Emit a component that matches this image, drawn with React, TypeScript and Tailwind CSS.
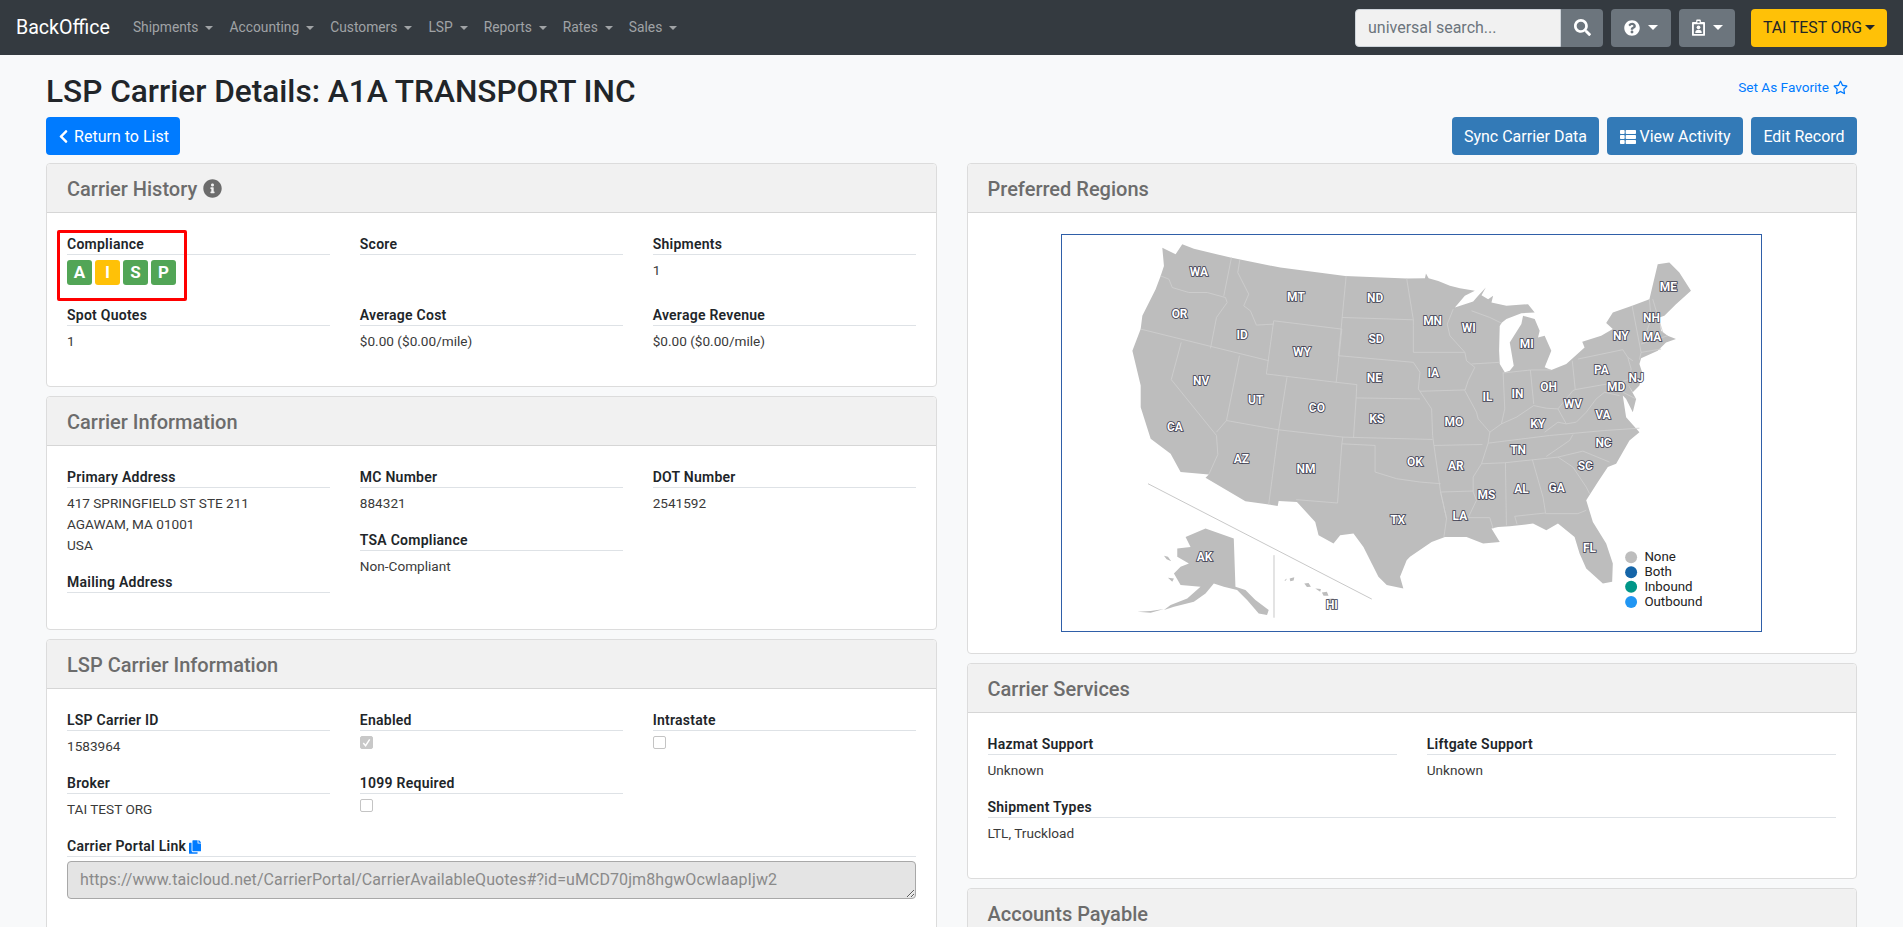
import type { ReactNode } from 'react';
import { FaChevronLeft, FaCopy, FaInfoCircle, FaQuestionCircle, FaRegStar, FaSearch, FaThList } from 'react-icons/fa';

const navItems = ['Shipments', 'Accounting', 'Customers', 'LSP', 'Reports', 'Rates', 'Sales'];

const usOutline = `M155,25 L190,38 L300,65 L450,95 L645,120 L830,128 L885,127 L888,113 L896,127 L925,135 L960,150 L990,157 L1035,165
L1005,180 L975,215 L1030,197 L1045,180 L1068,155 L1055,178 L1075,190 L1090,180 L1085,200 L1130,210 L1195,205 L1215,230
L1175,232 L1130,250 L1115,262 L1095,298 L1110,265 L1108,345 L1110,385 L1125,410 L1140,405 L1152,390 L1140,320 L1175,265
L1180,240 L1215,250 L1230,285 L1225,305 L1245,300 L1265,345 L1245,395 L1265,403 L1310,385 L1365,335 L1358,318 L1415,300
L1450,280 L1430,262 L1450,230 L1508,210 L1560,190 L1585,85 L1620,80 L1650,110 L1685,165 L1640,205 L1605,240 L1590,245
L1595,285 L1615,300 L1640,310 L1610,320 L1585,345 L1535,368 L1530,385 L1538,410 L1530,450 L1510,470 L1495,445 L1520,490
L1510,530 L1490,490 L1480,480 L1490,545 L1530,590 L1500,615 L1460,685 L1435,695 L1405,740 L1370,795 L1390,860 L1430,925
L1450,985 L1448,1040 L1420,1045 L1370,1000 L1350,955 L1335,905 L1285,865 L1250,885 L1210,865 L1140,873 L1105,875 L1085,880
L1110,920 L1060,925 L1010,905 L945,905 L905,920 L840,965 L830,975 L810,1025 L820,1060 L770,1050 L745,1025 L700,935 L670,895
L630,900 L610,925 L565,900 L555,860 L500,800 L445,797 L442,812 L410,807 L345,798 L225,727 L235,717 L150,710 L120,655 L60,610
L30,515 L30,450 L5,345 L30,280 L35,240 L75,160 L90,120 L100,90 L95,35 L135,55 L155,25 Z`;

const alaska = `M165,905 L225,880 L310,910 L315,1055 L345,1065 L375,1095 L415,1125 L410,1140 L385,1135 L350,1095 L320,1065 L280,1055
L250,1045 L225,1075 L190,1100 L130,1115 L100,1125 L120,1110 L170,1090 L210,1055 L150,1050 L130,1015 L150,995 L175,985
L140,965 L140,940 L180,935 Z`;

const islands = `M100,962 L112,965 L122,978 L108,972 Z M112,1028 L130,1030 L125,1040 Z M20,1130 L60,1128 L100,1122 L60,1133 Z
M462,1035 L470,1030 L466,1037 Z M478,1030 L492,1026 L490,1036 L480,1038 Z M522,1045 L535,1044 L542,1055 L530,1056 Z
M555,1060 L572,1062 L570,1070 Z M575,1072 L590,1070 L595,1082 L580,1082 Z M590,1092 L610,1090 L615,1110 L600,1118 L590,1105 Z`;

const stateLines = [
  '90,120 115,130 125,155 175,170 230,170 285,185',
  '303,65 280,180',
  '285,185 290,200 258,245 240,338',
  '30,280 415,375',
  '328,72 322,110 355,175 340,210 360,225 378,268 430,265',
  '430,255 408,415 618,440 635,280 430,255',
  '648,120 636,245 850,252',
  '636,245 625,360 795,375 850,380 870,410 865,460 905,520 908,600 912,630 932,770 950,850 942,905',
  '618,440 680,447 678,487 870,490',
  '470,425 445,583 640,605 908,612',
  '327,360 288,555 445,583',
  '152,320 122,432 258,600 262,657 235,717',
  '288,555 258,590',
  '678,487 670,607',
  '638,605 635,625 622,803 498,793',
  '635,625 735,630 735,710 800,730 870,740 932,745',
  '445,583 415,807',
  '830,128 850,252 850,270 850,350',
  '850,350 1005,350',
  '870,467 1005,463',
  '912,630 1058,627',
  '932,770 1030,767',
  '970,220 952,265 960,300 1005,350 1010,375 1035,395 1015,435 1005,465 1040,530 1045,550 1080,590 1075,623 1055,685 1030,725 1030,770 1040,795 1015,847 1080,847 1090,880',
  '1025,385 1108,380',
  '1025,225 1080,245 1115,262',
  '1120,410 1125,520 1115,565 1080,590',
  '1120,412 1202,403 1265,403',
  '1202,403 1212,505',
  '1115,565 1160,545 1212,510 1250,518 1285,520 1330,465 1337,462',
  '1328,375 1337,462 1490,435 1500,430 1505,400 1495,365 1480,342 1345,370',
  '1495,365 1510,375',
  '1508,210 1535,350 1530,372',
  '1560,190 1565,250 1540,320',
  '1570,190 1600,290',
  '1535,325 1615,300',
  '1535,350 1595,340',
  '1285,520 1310,565 1340,560 1370,530 1400,490 1425,470 1470,480',
  '1075,623 1260,600 1425,585 1530,578',
  '1245,590 1285,560 1310,565',
  '1055,685 1125,682 1210,673 1285,665 1360,647 1440,680',
  '1250,663 1320,615 1330,597',
  '1285,665 1330,695 1370,755 1380,775',
  '1127,682 1130,870',
  '1208,673 1240,785 1248,835 1345,835 1370,825',
  '1248,833 1155,843 1162,867',
  '932,770 950,850',
  '1480,470 1520,490',
];

const stateLabels: [string, number, number][] = [
  ['WA', 205, 107], ['MT', 497, 183], ['ND', 735, 187], ['OR', 147, 235], ['ID', 335, 297], ['SD', 738, 310],
  ['WY', 515, 348], ['NE', 733, 425], ['NV', 212, 435], ['UT', 376, 492], ['CO', 560, 516], ['KS', 740, 549],
  ['CA', 133, 575], ['MN', 908, 255], ['WI', 1017, 275], ['MI', 1191, 323], ['ME', 1617, 153], ['NH', 1566, 246],
  ['NY', 1474, 300], ['MA', 1568, 302], ['PA', 1416, 402], ['NJ', 1520, 425], ['MD', 1460, 453], ['IA', 910, 410],
  ['OH', 1257, 453], ['IN', 1163, 473], ['IL', 1073, 483], ['WV', 1330, 505], ['VA', 1420, 537], ['KY', 1224, 563],
  ['MO', 972, 558], ['AZ', 333, 670], ['NM', 527, 699], ['OK', 855, 678], ['TX', 803, 852], ['AK', 222, 966],
  ['HI', 605, 1110], ['NC', 1422, 622], ['TN', 1165, 642], ['AR', 978, 690], ['SC', 1367, 690], ['MS', 1070, 777],
  ['AL', 1175, 759], ['GA', 1281, 756], ['LA', 990, 840], ['FL', 1380, 938],
];

const legend: [string, string, number][] = [
  ['None', '#bdbdbd', 966],
  ['Both', '#1565a8', 1011],
  ['Inbound', '#009688', 1055],
  ['Outbound', '#2196f3', 1101],
];

function Caret({ big }: { big?: boolean }) {
  return (
    <span
      className={
        big
          ? 'inline-block h-0 w-0 border-x-[5px] border-t-[5px] border-x-transparent border-t-current'
          : 'inline-block h-0 w-0 border-x-[4px] border-t-[4.8px] border-x-transparent border-t-current'
      }
    />
  );
}

function Card({ title, children, map }: { title: ReactNode; children?: ReactNode; map?: boolean }) {
  return (
    <div className="mb-[9px] rounded-[4px] border border-[#dcdcdc] bg-white">
      <div className="flex h-[49px] items-center gap-[6px] rounded-t-[4px] border-b border-[#d6d6d6] bg-[#f1f1f1] px-5 pt-px text-[20px] font-medium text-[#6c6c6c]">
        {title}
      </div>
      {children && <div className={`relative px-5 pt-[21px] ${map ? 'pb-[21px]' : 'pb-[18px]'}`}>{children}</div>}
    </div>
  );
}

function Field({ label, children }: { label: ReactNode; children?: ReactNode }) {
  return (
    <div className={`leading-[21px] ${children ? 'mb-4' : 'mb-[18px]'}`}>
      <div className="h-[21px] border-b border-[#dee2e6] text-[14px] font-semibold tracking-[0.25px] text-[#212529]">{label}</div>
      {children && <div className="mt-[5px] text-[13.6px] text-[#3a3a3a]">{children}</div>}
    </div>
  );
}

function Badge({ letter, color }: { letter: string; color: string }) {
  return (
    <span className={`flex h-[25px] w-[25px] items-center justify-center rounded-[3px] text-[17px] font-bold text-white ${color}`}>
      {letter}
    </span>
  );
}

function Checkbox({ checked }: { checked?: boolean }) {
  return (
    <span className={`mt-[2px] flex h-[13px] w-[13px] items-center justify-center rounded-[2px] border ${checked ? 'border-[#c8c8c8] bg-[#c8c8c8]' : 'border-[#c4c4c4] bg-white'}`}>
      {checked && (
        <svg viewBox="0 0 12 12" className="h-[11px] w-[11px]">
          <path d="M2.5 6.5 L5 9.5 L9.5 2.5" fill="none" stroke="#fff" strokeWidth="1.6" />
        </svg>
      )}
    </span>
  );
}

function BadgeClipboard() {
  return (
    <svg viewBox="0 0 14 18" className="h-[17px] w-[13px]" fill="currentColor">
      <path
        fillRule="evenodd"
        d="M1 3 H4.5 V1.5 Q4.5 0.5 5.5 0.5 H8.5 Q9.5 0.5 9.5 1.5 V3 H13 Q14 3 14 4 V17 Q14 18 13 18 H1 Q0 18 0 17 V4 Q0 3 1 3 Z M5.8 2 V4 H8.2 V2 Z M2 5.5 V16 H12 V5.5 Z"
      />
      <circle cx="7" cy="8.8" r="2" />
      <path d="M3.5 15 Q3.5 11.5 7 11.5 Q10.5 11.5 10.5 15 Z" />
    </svg>
  );
}

function UsMap() {
  return (
    <svg viewBox="-204 -3 2097 1191" className="block h-full w-full">
      <path d={usOutline} fill="#bdbdbd" />
      <path d={alaska} fill="#bdbdbd" />
      <path d={islands} fill="#bdbdbd" />
      {stateLines.map((points) => (
        <polyline key={points} points={points} fill="none" stroke="#cfcfcf" strokeWidth="2.5" />
      ))}
      <line x1="52" y1="745" x2="725" y2="1092" stroke="#c8c8c8" strokeWidth="3" />
      <line x1="431" y1="960" x2="431" y2="1148" stroke="#c8c8c8" strokeWidth="3" />
      {stateLabels.map(([name, x, y]) => (
        <text
          key={name}
          x={x}
          y={y + 13}
          textAnchor="middle"
          fontSize="36"
          fontWeight="700"
          fill="#fff"
          stroke="#3c3c50"
          strokeWidth="5"
          className="[paint-order:stroke]"
        >
          {name}
        </text>
      ))}
      {legend.map(([name, color, y]) => (
        <g key={name}>
          <circle cx="1505" cy={y} r="18" fill={color} />
          <text x="1545" y={y + 13} fontSize="40" fontWeight="400" fill="#222">
            {name}
          </text>
        </g>
      ))}
    </svg>
  );
}

export default function App() {
  return (
    <div className="h-screen overflow-hidden bg-[#f8f9fa] font-['Roboto',sans-serif] text-[#212529]">
      <nav className="flex h-[55px] items-center bg-[#343a40] pr-4 pl-[16px]">
        <span className="mr-[15px] text-[19.6px] text-white">BackOffice</span>
        {navItems.map((item) => (
          <a key={item} className="flex items-center gap-[7px] px-2 text-[13.8px] text-[#a0a3a6]">
            {item}
            <Caret />
          </a>
        ))}
        <div className="ml-auto flex items-center">
          <input
            readOnly
            placeholder="universal search..."
            className="h-[38px] w-[206px] rounded-l-[4px] border border-[#ced4da] bg-[#f1f1f1] px-3 text-[16px] placeholder:text-[#6c757d]"
          />
          <button className="flex h-[38px] w-[42px] items-center justify-center rounded-r-[4px] bg-[#6c757d] text-white">
            <FaSearch className="h-[17px] w-[17px]" />
          </button>
          <button className="ml-2 flex h-[38px] w-[60px] items-center justify-center gap-[8px] rounded-[4px] bg-[#6c757d] text-white">
            <FaQuestionCircle className="h-4 w-4" />
            <Caret big />
          </button>
          <button className="ml-2 flex h-[38px] w-[56px] items-center justify-center gap-[8px] rounded-[4px] bg-[#6c757d] text-white">
            <BadgeClipboard />
            <Caret big />
          </button>
          <button className="ml-4 flex h-[38px] w-[136px] items-center justify-center gap-[3px] rounded-[4px] bg-[#ffc107] text-[15.8px] text-[#212529]">
            TAI TEST ORG
            <Caret big />
          </button>
        </div>
      </nav>

      <main className="px-[46px]">
        <div className="flex h-[62px] items-start justify-between">
          <h1 className="mt-[18px] text-[31.6px] leading-[38px] font-medium text-[#212529]">
            LSP Carrier Details: A1A TRANSPORT INC
          </h1>
          <a className="mt-[22px] mr-[9px] flex items-center gap-[4px] text-[13.6px] text-[#007bff]">
            Set As Favorite
            <FaRegStar className="h-[15px] w-[15px]" />
          </a>
        </div>

        <div className="flex items-center">
          <button className="flex h-[38px] w-[134px] items-center justify-center gap-[4px] rounded-[4px] bg-[#007bff] pt-px text-[16px] text-white">
            <FaChevronLeft className="h-[15px] w-[13px]" />
            Return to List
          </button>
          <button className="ml-auto h-[38px] w-[147px] rounded-[4px] bg-[#337ab7] pt-px text-[16px] text-white">Sync Carrier Data</button>
          <button className="ml-2 flex h-[38px] w-[136px] items-center justify-center gap-[4px] rounded-[4px] bg-[#337ab7] pt-px text-[16px] text-white">
            <FaThList className="h-[16px] w-[16px]" />
            View Activity
          </button>
          <button className="ml-2 h-[38px] w-[106px] rounded-[4px] bg-[#337ab7] pt-px text-[16px] text-white">Edit Record</button>
        </div>

        <div className="mt-2 grid grid-cols-2 gap-x-[30px]">
          <div>
            <Card
              title={
                <>
                  Carrier History
                  <FaInfoCircle className="h-[19px] w-[19px] text-[#6c6c6c]" />
                </>
              }
            >
              <div className="absolute top-[17px] left-[10px] h-[71px] w-[130px] rounded-[2px] border-[3px] border-[#ff0000]" />
              <div className="grid grid-cols-3 gap-x-[30px]">
                <Field label="Compliance">
                  <div className="flex h-[29px] items-start gap-[3px]">
                    <Badge letter="A" color="bg-[#52a556]" />
                    <Badge letter="I" color="bg-[#ffc107]" />
                    <Badge letter="S" color="bg-[#52a556]" />
                    <Badge letter="P" color="bg-[#52a556]" />
                  </div>
                </Field>
                <Field label="Score" />
                <Field label="Shipments">1</Field>
                <Field label="Spot Quotes">1</Field>
                <Field label="Average Cost">$0.00 ($0.00/mile)</Field>
                <Field label="Average Revenue">$0.00 ($0.00/mile)</Field>
              </div>
            </Card>

            <Card title="Carrier Information">
              <div className="grid grid-cols-3 gap-x-[30px]">
                <div>
                  <Field label="Primary Address">
                    417 SPRINGFIELD ST STE 211
                    <br />
                    AGAWAM, MA 01001
                    <br />
                    USA
                  </Field>
                  <Field label="Mailing Address" />
                </div>
                <div>
                  <Field label="MC Number">884321</Field>
                  <Field label="TSA Compliance">Non-Compliant</Field>
                </div>
                <div>
                  <Field label="DOT Number">2541592</Field>
                </div>
              </div>
            </Card>

            <Card title="LSP Carrier Information">
              <div className="grid grid-cols-3 gap-x-[30px]">
                <Field label="LSP Carrier ID">1583964</Field>
                <Field label="Enabled">
                  <div className="h-[21px]">
                    <Checkbox checked />
                  </div>
                </Field>
                <Field label="Intrastate">
                  <div className="h-[21px]">
                    <Checkbox />
                  </div>
                </Field>
                <Field label="Broker">TAI TEST ORG</Field>
                <Field label="1099 Required">
                  <div className="h-[21px]">
                    <Checkbox />
                  </div>
                </Field>
              </div>
              <Field
                label={
                  <span className="flex items-center gap-[3px]">
                    Carrier Portal Link
                    <FaCopy className="h-[14px] w-[12px] text-[#007bff]" />
                  </span>
                }
              >
                <textarea
                  readOnly
                  disabled
                  rows={1}
                  value="https://www.taicloud.net/CarrierPortal/CarrierAvailableQuotes#?id=uMCD70jm8hgwOcwlaapIjw2"
                  className="-mt-px block h-[38px] w-full rounded-[4px] border border-[#a8a8a8] bg-[#e4e4e4] px-3 py-[6px] text-[16px] leading-[24px] tracking-[0.08px] text-[#8a8a8a]"
                />
              </Field>
            </Card>
          </div>

          <div>
            <Card title="Preferred Regions" map>
              <div className="mx-auto h-[398px] w-[701px] border border-[#2f5fa8]">
                <UsMap />
              </div>
            </Card>

            <Card title="Carrier Services">
              <div className="grid grid-cols-2 gap-x-[30px]">
                <Field label="Hazmat Support">Unknown</Field>
                <Field label="Liftgate Support">Unknown</Field>
              </div>
              <Field label="Shipment Types">LTL, Truckload</Field>
            </Card>

            <Card title="Accounts Payable" />
          </div>
        </div>
      </main>
    </div>
  );
}
